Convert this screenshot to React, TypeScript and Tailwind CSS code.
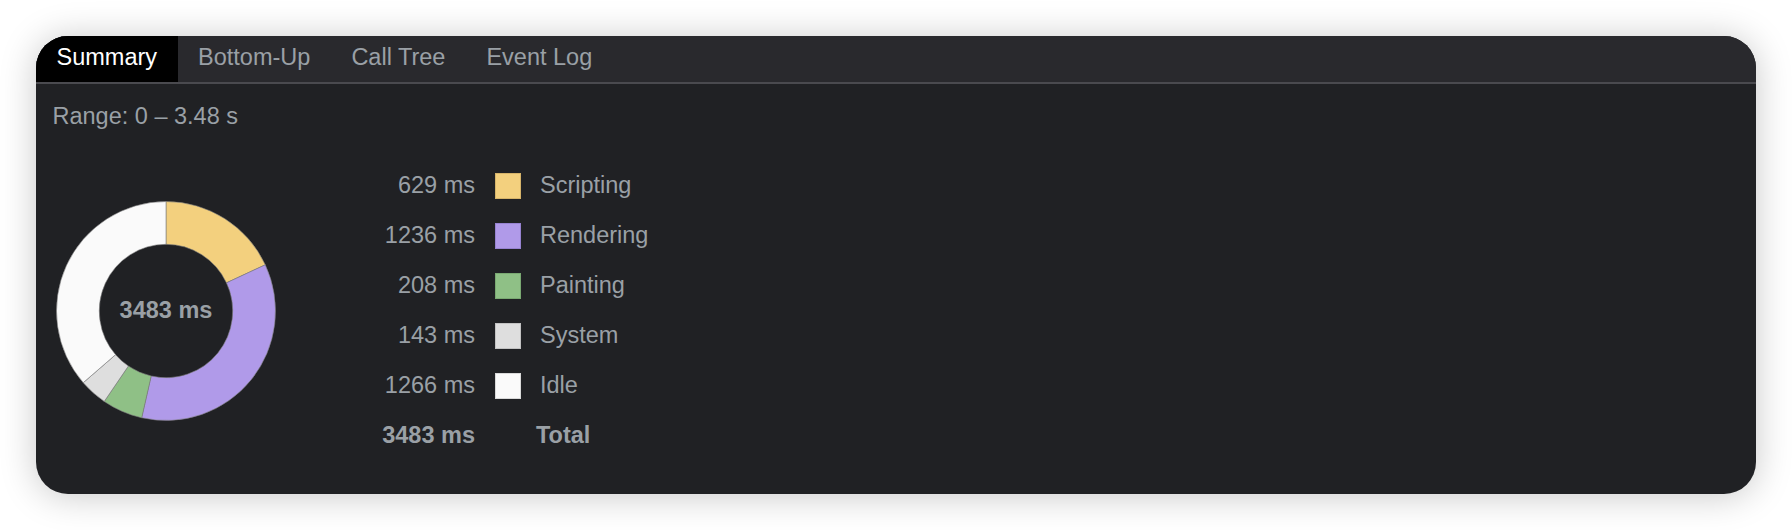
import React from 'react';

const segments = [
  { label: 'Scripting', value: 629, fill: '#f3d07e', border: '#d6b46a' },
  { label: 'Rendering', value: 1236, fill: '#b09ae9', border: '#9783d1' },
  { label: 'Painting', value: 208, fill: '#8fc086', border: '#7aa972' },
  { label: 'System', value: 143, fill: '#dedede', border: '#c2c2c2' },
  { label: 'Idle', value: 1266, fill: '#fafafa', border: '#d9d9d9' },
];

// devtools rounds each entry separately, so the shown total is 3483
const totalLabel = '3483 ms';
const total = segments.reduce((acc, s) => acc + s.value, 0);

function arcPath(cx: number, cy: number, r1: number, r2: number, a0: number, a1: number) {
  const p = (r: number, a: number) => [cx + r * Math.sin(a), cy - r * Math.cos(a)];
  const large = a1 - a0 > Math.PI ? 1 : 0;
  const [x0, y0] = p(r2, a0);
  const [x1, y1] = p(r2, a1);
  const [x2, y2] = p(r1, a1);
  const [x3, y3] = p(r1, a0);
  return `M ${x0} ${y0} A ${r2} ${r2} 0 ${large} 1 ${x1} ${y1} L ${x2} ${y2} A ${r1} ${r1} 0 ${large} 0 ${x3} ${y3} Z`;
}

function Donut() {
  let angle = 0;
  return (
    <div className="relative w-[220px] h-[220px] shrink-0">
      <svg width="220" height="220" viewBox="0 0 220 220">
        {segments.map(s => {
          const a0 = angle;
          const a1 = angle + (s.value / total) * Math.PI * 2;
          angle = a1;
          return (
            <path
              key={s.label}
              d={arcPath(110, 110, 66.7, 109.5, a0, a1)}
              fill={s.fill}
              stroke="#7d7d7d"
              strokeWidth={0.6}
            />
          );
        })}
      </svg>
      <div className="absolute inset-0 flex items-center justify-center">
        <span className="font-bold text-[#9aa0a6] text-[23.5px]">{totalLabel}</span>
      </div>
    </div>
  );
}

export default function App() {
  const tabs = ['Summary', 'Bottom-Up', 'Call Tree', 'Event Log'];

  return (
    <div
      className="w-[1792px] h-[530px] bg-white p-[36px]"
      style={{ fontFamily: '"Liberation Sans", Arial, sans-serif' }}
    >
      <div className="h-full rounded-[32px] overflow-hidden bg-[#202124] shadow-[0_2px_36px_rgba(0,0,0,0.22)] flex flex-col">
        {/* Tab strip */}
        <div className="flex h-[48px] shrink-0 bg-[#29292d] border-b-2 border-[#4a4a4f]">
          {tabs.map((t, i) => (
            <div
              key={t}
              className={`flex items-center px-[20.5px] pb-[2px] text-[23.5px] ${
                i === 0 ? 'bg-black text-white' : 'text-[#9aa0a6]'
              }`}
            >
              {t}
            </div>
          ))}
        </div>

        <div className="pl-[16.5px] pt-[18px]">
          <div className="text-[23.5px] text-[#9aa0a6] leading-[28px]">Range: 0 – 3.48 s</div>

          <div className="flex items-center mt-[31px] pl-[3.5px]">
            <Donut />
            <div className="grid grid-cols-[150px_26px_auto] ml-[49px] text-[23.5px] text-[#9aa0a6]">
              {segments.map(s => (
                <React.Fragment key={s.label}>
                  <div className="h-[50px] flex items-center justify-end">{s.value} ms</div>
                  <div className="h-[50px] flex items-center ml-[20px] -mr-[20px]">
                    <div
                      className="w-[26px] h-[26px] border"
                      style={{ backgroundColor: s.fill, borderColor: s.border }}
                    />
                  </div>
                  <div className="h-[50px] flex items-center pl-[39px]">{s.label}</div>
                </React.Fragment>
              ))}
              <div className="h-[50px] flex items-center justify-end font-bold">{totalLabel}</div>
              <div />
              <div className="h-[50px] flex items-center pl-[35px] font-bold">Total</div>
            </div>
          </div>
        </div>
      </div>
    </div>
  );
}
